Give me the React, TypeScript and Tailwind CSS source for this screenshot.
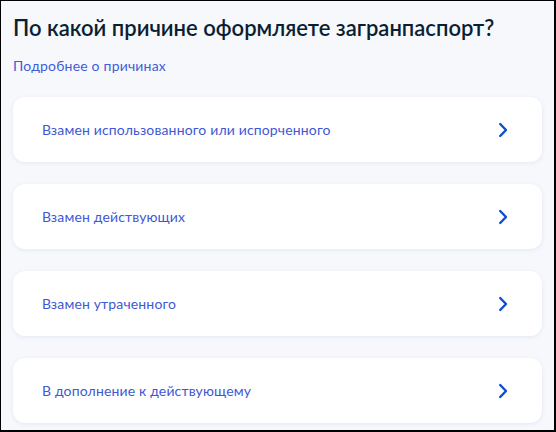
import React from "react";

const reasons = [
  "Взамен использованного или испорченного",
  "Взамен действующих",
  "Взамен утраченного",
  "В дополнение к действующему",
];

function Chevron() {
  return (
    <svg width="10" height="16" viewBox="0 0 10 16" fill="none">
      <path
        d="M2.2 2 L8 8 L2.2 14"
        stroke="#0d4cd3"
        strokeWidth="2.4"
        strokeLinecap="round"
        strokeLinejoin="round"
      />
    </svg>
  );
}

export default function App() {
  return (
    <div
      className="w-[556px] h-[432px] overflow-hidden bg-[#f6f8fc] border-l border-t border-r-2 border-b-2 border-black"
      style={{ fontFamily: "Lato, 'Noto Sans', sans-serif" }}
    >
      <div className="px-3 pt-[13px]">
        <h1 className="text-[22px] leading-[28px] font-semibold text-[#0b1f33]">
          По какой причине оформляете загранпаспорт?
        </h1>
        <div className="mt-[15px] text-[14px] leading-[18px] tracking-[0.2px] text-[#3f5cd8]">
          Подробнее о причинах
        </div>
        <div className="mt-[22px] flex flex-col gap-[22px]">
          {reasons.map((r) => (
            <div
              key={r}
              className="h-[65px] rounded-[12px] bg-white shadow-[0_1px_4px_rgba(140,160,200,0.18)] flex items-center justify-between pl-[29px] pr-[34px]"
            >
              <span className="text-[14px] tracking-[0.15px] text-[#4058d4]">{r}</span>
              <Chevron />
            </div>
          ))}
        </div>
      </div>
    </div>
  );
}
